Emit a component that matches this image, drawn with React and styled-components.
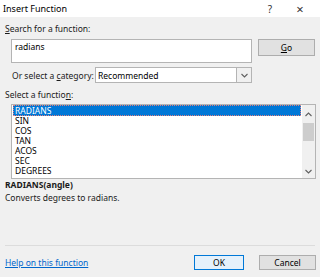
import React from "react";
import styled, { createGlobalStyle } from "styled-components";

const Global = createGlobalStyle`
  html, body { margin: 0; padding: 0; }
  body {
    width: 320px; height: 277px; overflow: hidden;
    background: #f0f0f0;
    font-family: "Noto Sans", "Open Sans", sans-serif;
    font-size: 8.5px; color: #000;
  }
`;

const Dialog = styled.div`
  width: 320px; height: 277px; display: flex; flex-direction: column;
  background: #f0f0f0;
`;

const TitleBar = styled.div`
  height: 17px; background: #fff; display: flex; align-items: center;
  padding-left: 3px;
`;
const Title = styled.div`flex: 1; font-size: 9px; color: #000;`;
const TitleBtn = styled.div`
  width: ${p => p.$w}px; text-align: center; font-size: ${p => p.$size}px; color: #333;
`;

const Body = styled.div`
  padding: 0 4px 0 5px; display: flex; flex-direction: column; flex: 1;
`;

const Label = styled.div`
  height: 12px; line-height: 12px; margin-top: ${p => p.$mt}px; color: #1a1a1a;
  white-space: nowrap;
`;
const Key = styled.span`text-decoration: underline;`;

const SearchRow = styled.div`
  display: flex; margin-top: 4px; padding-left: 6px; gap: 6px; align-items: flex-start;
`;
const SearchBox = styled.div`
  width: 241px; height: 24px; box-sizing: border-box; background: #fff;
  border: 1px solid #b4b4b4; padding: 1px 3px; line-height: 12px;
`;
const Button = styled.div`
  width: ${p => p.$w}px; height: ${p => p.$h}px; box-sizing: border-box;
  background: ${p => (p.$primary ? "#e5f1fb" : "#e1e1e1")};
  border: 1px solid ${p => (p.$primary ? "#0078d7" : "#adadad")};
  display: flex; align-items: center; justify-content: center; color: #000;
`;

const CategoryRow = styled.div`
  display: flex; align-items: center; margin-top: 4px; padding-left: 7px; height: 16px;
`;
const CatLabel = styled.div`width: 83px; flex: none; white-space: nowrap; color: #1a1a1a;`;
const Select = styled.div`
  width: 157px; height: 16px; box-sizing: border-box; background: #fff;
  border: 1px solid #b4b4b4; display: flex; align-items: center;
`;
const SelectText = styled.div`flex: 1; padding-left: 2px;`;
const SelectArrow = styled.div`
  width: 14px; height: 14px; border-left: 1px solid #b4b4b4; background: #f0f0f0;
  display: flex; align-items: center; justify-content: center;
`;

const ListBox = styled.div`
  margin: 3px 0 0 6px; width: 305px; height: 75px; box-sizing: border-box;
  border: 1px solid #b4b4b4; background: #fff; display: flex;
`;
const Items = styled.div`flex: 1; padding: 0 1px;`;
const Item = styled.div`
  height: 10px; line-height: 10px; padding-left: 2px; box-sizing: border-box;
  ${p => p.$sel ? `background:#0078d7;color:#fff;outline:1px dotted #e08080;outline-offset:-1px;height:11px;line-height:11px;` : `color:#000;`}
`;
const ScrollBar = styled.div`
  width: 13px; background: #f0f0f0; display: flex; flex-direction: column;
  align-items: center;
`;
const Arrow = styled.div`
  height: 13px; width: 13px; display: flex; align-items: center; justify-content: center;
  margin-top: ${p => p.$mt || 0}px;
`;
const Thumb = styled.div`width: 11px; height: 18px; background: #cdcdcd; margin-top: 2px;`;

const Signature = styled.div`
  height: 12px; line-height: 12px; font-weight: bold; margin-top: 0px; color: #1a1a1a;
`;
const Desc = styled.div`height: 13px; line-height: 13px; color: #1a1a1a;`;

const Separator = styled.div`
  margin-top: 41px; height: 1px; background: #dcdcdc; width: 310px;
`;
const Footer = styled.div`
  display: flex; align-items: center; margin-top: 9px; gap: 15px;
`;
const Help = styled.div`
  flex: 1; color: #0066cc; text-decoration: underline;
`;

const Chevron = ({ up }) => (
  <svg width="7" height="5" viewBox="0 0 7 5">
    <path d={up ? "M0.5 4 L3.5 1 L6.5 4" : "M0.5 1 L3.5 4 L6.5 1"} fill="none" stroke="#606060" strokeWidth="1.1" />
  </svg>
);

const functions = ["RADIANS", "SIN", "COS", "TAN", "ACOS", "SEC", "DEGREES"];

export default function App() {
  return (
    <>
      <Global />
      <Dialog>
        <TitleBar>
          <Title>Insert Function</Title>
          <TitleBtn $w={20} $size={10}>?</TitleBtn>
          <TitleBtn $w={40} $size={13}>×</TitleBtn>
        </TitleBar>
        <Body>
          <Label $mt={6}><Key>S</Key>earch for a function:</Label>
          <SearchRow>
            <SearchBox>radians</SearchBox>
            <Button $w={57} $h={17}><Key>G</Key>o</Button>
          </SearchRow>
          <CategoryRow>
            <CatLabel>Or select a <Key>c</Key>ategory:</CatLabel>
            <Select>
              <SelectText>Recommended</SelectText>
              <SelectArrow><Chevron /></SelectArrow>
            </Select>
          </CategoryRow>
          <Label $mt={6}>Select a functio<Key>n</Key>:</Label>
          <ListBox>
            <Items>
              {functions.map((f, i) => (
                <Item key={f} $sel={i === 0}>{f}</Item>
              ))}
            </Items>
            <ScrollBar>
              <Arrow $mt={3}><Chevron up /></Arrow>
              <Thumb />
              <Arrow $mt={24}><Chevron /></Arrow>
            </ScrollBar>
          </ListBox>
          <Signature>RADIANS(angle)</Signature>
          <Desc>Converts degrees to radians.</Desc>
          <Separator />
          <Footer>
            <Help>Help on this function</Help>
            <Button $w={50} $h={15} $primary>OK</Button>
            <Button $w={57} $h={15}>Cancel</Button>
          </Footer>
        </Body>
      </Dialog>
    </>
  );
}
